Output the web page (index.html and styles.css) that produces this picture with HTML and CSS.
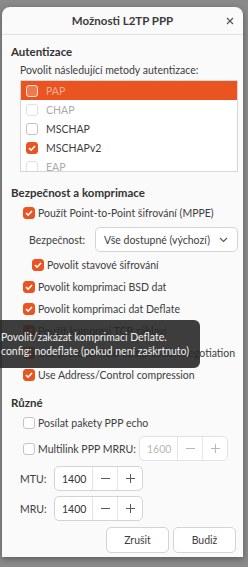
FILE: index.html
```html
<!DOCTYPE html>
<html lang="cs">
<head>
    <meta charset="UTF-8">
    <meta name="viewport" content="width=device-width, initial-scale=1.0">
    <title>Možnosti L2TP PPP</title>
    <link rel="stylesheet" href="styles.css">
</head>
<body>
    <div class="dialog">
        <div class="titlebar">
            <span class="title">Možnosti L2TP PPP</span>
            <svg class="close" width="8" height="8" viewBox="0 0 8 8"><path d="M1 1L7 7M7 1L1 7" stroke="#555" stroke-width="1.2"/></svg>
        </div>

        <div class="content">
            <h2 class="heading first">Autentizace</h2>
            <p class="hint">Povolit následující metody autentizace:</p>
            <div class="methods">
                <div class="method selected"><span class="check"></span>PAP</div>
                <div class="method disabled"><span class="check"></span>CHAP</div>
                <div class="method"><span class="check"></span>MSCHAP</div>
                <div class="method"><span class="check on"><svg width="12" height="12" viewBox="0 0 12 12"><path d="M3 6.2L5.1 8.2L9 4" fill="none" stroke="#fff" stroke-width="1.6"/></svg></span>MSCHAPv2</div>
                <div class="method disabled"><span class="check"></span>EAP</div>
            </div>

            <h2 class="heading">Bezpečnost a komprimace</h2>
            <div class="row"><span class="check on"><svg width="12" height="12" viewBox="0 0 12 12"><path d="M3 6.2L5.1 8.2L9 4" fill="none" stroke="#fff" stroke-width="1.6"/></svg></span>Použít Point-to-Point šifrování (MPPE)</div>
            <div class="combo-row">
                <span class="label">Bezpečnost:</span>
                <div class="combo">Vše dostupné (výchozí)<svg width="9" height="6" viewBox="0 0 9 6"><path d="M1 1L4.5 4.5L8 1" fill="none" stroke="#555" stroke-width="1.1"/></svg></div>
            </div>
            <div class="row sub"><span class="check on"><svg width="12" height="12" viewBox="0 0 12 12"><path d="M3 6.2L5.1 8.2L9 4" fill="none" stroke="#fff" stroke-width="1.6"/></svg></span>Povolit stavové šifrování</div>
            <div class="row"><span class="check on"><svg width="12" height="12" viewBox="0 0 12 12"><path d="M3 6.2L5.1 8.2L9 4" fill="none" stroke="#fff" stroke-width="1.6"/></svg></span>Povolit komprimaci BSD dat</div>
            <div class="row"><span class="check on"><svg width="12" height="12" viewBox="0 0 12 12"><path d="M3 6.2L5.1 8.2L9 4" fill="none" stroke="#fff" stroke-width="1.6"/></svg></span>Povolit komprimaci dat Deflate</div>
            <div class="row"><span class="check on"><svg width="12" height="12" viewBox="0 0 12 12"><path d="M3 6.2L5.1 8.2L9 4" fill="none" stroke="#fff" stroke-width="1.6"/></svg></span>Použít kompresi TCP záhlaví</div>
            <div class="row"><span class="check on"><svg width="12" height="12" viewBox="0 0 12 12"><path d="M3 6.2L5.1 8.2L9 4" fill="none" stroke="#fff" stroke-width="1.6"/></svg></span>Use protocol field compression negotiation</div>
            <div class="row"><span class="check on"><svg width="12" height="12" viewBox="0 0 12 12"><path d="M3 6.2L5.1 8.2L9 4" fill="none" stroke="#fff" stroke-width="1.6"/></svg></span>Use Address/Control compression</div>

            <h2 class="heading misc">Různé</h2>
            <div class="row"><span class="check"></span>Posílat pakety PPP echo</div>
            <div class="row spin-row">
                <span class="check"></span>Multilink PPP MRRU:
                <div class="spin disabled">
                    <span class="value">1600</span>
                    <span class="btn"><svg width="9" height="9" viewBox="0 0 9 9"><path d="M0 4.5H9" stroke="currentColor"/></svg></span>
                    <span class="btn"><svg width="9" height="9" viewBox="0 0 9 9"><path d="M0 4.5H9M4.5 0V9" stroke="currentColor"/></svg></span>
                </div>
            </div>
            <div class="field-row">
                <span class="label">MTU:</span>
                <div class="spin">
                    <span class="value">1400</span>
                    <span class="btn"><svg width="9" height="9" viewBox="0 0 9 9"><path d="M0 4.5H9" stroke="currentColor"/></svg></span>
                    <span class="btn"><svg width="9" height="9" viewBox="0 0 9 9"><path d="M0 4.5H9M4.5 0V9" stroke="currentColor"/></svg></span>
                </div>
            </div>
            <div class="field-row">
                <span class="label">MRU:</span>
                <div class="spin">
                    <span class="value">1400</span>
                    <span class="btn"><svg width="9" height="9" viewBox="0 0 9 9"><path d="M0 4.5H9" stroke="currentColor"/></svg></span>
                    <span class="btn"><svg width="9" height="9" viewBox="0 0 9 9"><path d="M0 4.5H9M4.5 0V9" stroke="currentColor"/></svg></span>
                </div>
            </div>

            <div class="actions">
                <button>Zrušit</button>
                <button>Budiž</button>
            </div>
        </div>
    </div>

    <div class="tooltip">
        Povolit/zakázat komprimaci Deflate.<br>
        config: nodeflate (pokud není zaškrtnuto)
    </div>
</body>
</html>
```

FILE: styles.css
```css
body {
    margin: 0;
    height: 567px;
    overflow: hidden;
    background: #8a8a8a;
    font-family: Lato, "Noto Sans", sans-serif;
    font-size: 10.5px;
    color: #3d3d3d;
    padding: 7px 5px 0 2px;
    box-sizing: border-box;
}

.dialog {
    width: 241px;
    height: 550px;
    background: #fafafa;
    border-radius: 8px 8px 0 0;
    box-shadow: 0 2px 6px rgba(0, 0, 0, 0.35);
}

.titlebar {
    height: 27px;
    border-bottom: 1px solid #e2e2e2;
    display: flex;
    align-items: center;
    justify-content: center;
    position: relative;
}

.title {
    font-weight: bold;
    font-size: 11.5px;
    color: #3a3a3a;
}

.close {
    position: absolute;
    right: 9px;
    top: 10px;
}

.content {
    padding: 0 5px 0 9px;
}

.heading {
    margin: 12px 0 0;
    height: 18px;
    line-height: 18px;
    font-size: 11.5px;
    font-weight: bold;
    color: #333;
}

.heading.first {
    margin-top: 8px;
}

.heading.misc {
    margin-top: 8px;
}

.hint {
    margin: 0 0 1px 9px;
    height: 18px;
    line-height: 18px;
}

.check {
    width: 12px;
    height: 12px;
    box-sizing: border-box;
    border: 1px solid #c4c4c4;
    border-radius: 3px;
    background: #fff;
    flex: none;
    display: flex;
}

.check.on {
    background: #e95420;
    border-color: #e95420;
}

.check.on svg {
    margin: -1px;
}

.methods {
    margin-left: 9px;
    height: 90px;
    border: 1px solid #d6d6d6;
    background: #fff;
    overflow: hidden;
}

.method {
    height: 19px;
    display: flex;
    align-items: center;
    gap: 8px;
    padding-left: 5px;
}

.method.selected {
    background: #e95420;
    color: #f6b096;
}

.method.selected .check {
    background: #ee7a50;
    border: 1.5px solid #fbe1d6;
}

.method.disabled {
    color: #ababab;
}

.method.disabled .check {
    border-color: #e2e2e2;
}

.row {
    height: 22px;
    display: flex;
    align-items: center;
    gap: 3px;
    padding-left: 12px;
    white-space: nowrap;
}

.row.sub {
    padding-left: 21px;
    margin-top: 2px;
}

.combo-row {
    margin-top: 3px;
    height: 25px;
    display: flex;
    align-items: center;
    padding-left: 18px;
}

.combo-row .label {
    width: 66px;
}

.combo {
    width: 143px;
    height: 25px;
    box-sizing: border-box;
    border: 1px solid #d4d4d4;
    border-radius: 5px;
    background: #fff;
    display: flex;
    align-items: center;
    justify-content: space-between;
    padding: 0 9px 0 8px;
}

.spin-row {
    height: 25px;
    margin-top: 2px;
}

.spin {
    height: 25px;
    width: 89px;
    box-sizing: border-box;
    border: 1px solid #d4d4d4;
    border-radius: 5px;
    background: #fff;
    display: flex;
    flex: none;
}

.spin-row .spin {
    margin: 0 10px 0 auto;
}

.spin .value {
    width: 37px;
    display: flex;
    align-items: center;
    padding-left: 7px;
    box-sizing: border-box;
    color: #333;
}

.spin .btn {
    flex: 1;
    border-left: 1px solid #e4e4e4;
    display: flex;
    align-items: center;
    justify-content: center;
    color: #5a5a5a;
}

.spin.disabled .value,
.spin.disabled .btn {
    color: #b8b8b8;
}

.spin.disabled {
    border-color: #e2e2e2;
}

.field-row {
    margin-top: 5px;
    height: 25px;
    display: flex;
    align-items: center;
    padding-left: 9px;
}

.field-row + .field-row {
    margin-top: 5px;
}

.field-row .label {
    width: 34px;
}

.actions {
    margin-top: 6px;
    display: flex;
    justify-content: flex-end;
    gap: 4px;
    padding-right: 2px;
}

.actions button {
    width: 63px;
    height: 26px;
    font-family: inherit;
    font-size: 10.5px;
    color: #3d3d3d;
    background: #fff;
    border: 1px solid #d4d4d4;
    border-radius: 5px;
}

.tooltip {
    position: absolute;
    left: -8px;
    top: 320px;
    width: 208px;
    height: 48px;
    box-sizing: border-box;
    padding: 10px 0 0 9px;
    border-radius: 6px;
    background: rgba(40, 40, 40, 0.9);
    color: #f0f0f0;
    line-height: 14px;
}
```
